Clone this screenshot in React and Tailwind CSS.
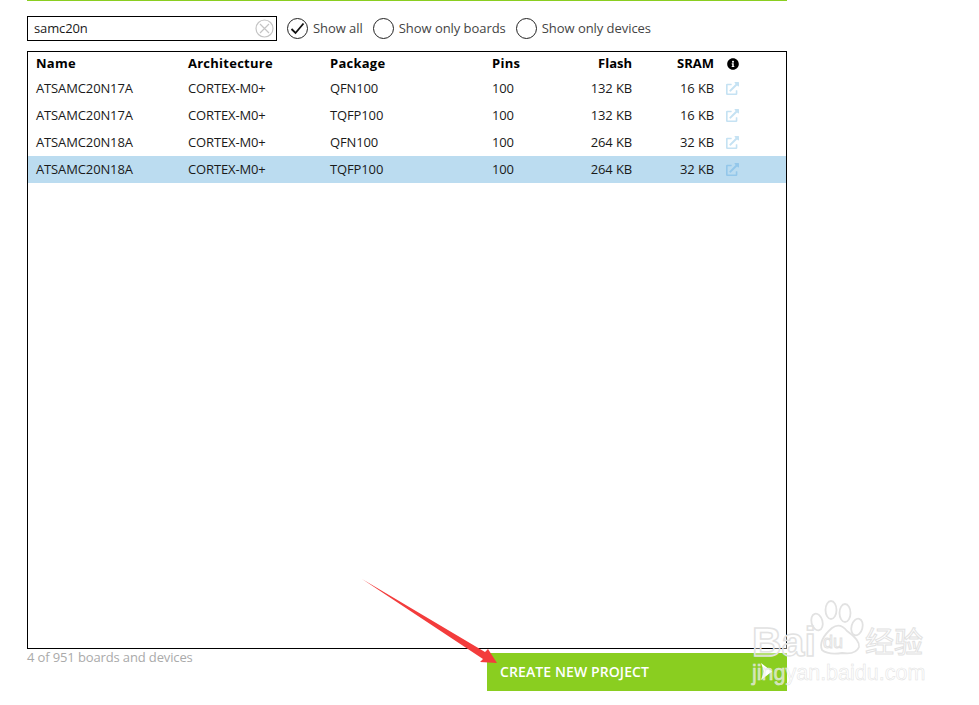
import React from 'react'
import { FaInfoCircle, FaExternalLinkAlt } from 'react-icons/fa'

const rows = [
  ['ATSAMC20N17A', 'CORTEX-M0+', 'QFN100', '100', '132 KB', '16 KB'],
  ['ATSAMC20N17A', 'CORTEX-M0+', 'TQFP100', '100', '132 KB', '16 KB'],
  ['ATSAMC20N18A', 'CORTEX-M0+', 'QFN100', '100', '264 KB', '32 KB'],
  ['ATSAMC20N18A', 'CORTEX-M0+', 'TQFP100', '100', '264 KB', '32 KB'],
]

const gridCols = 'grid grid-cols-[152px_142px_162px_60px_80px_82px_1fr] pl-2 items-center'

function Radio({ label, checked }) {
  return (
    <label className="flex items-center gap-[5px]">
      <span className="w-[21px] h-[21px] rounded-full border border-[#222] flex items-center justify-center">
        {checked && (
          <svg width="15" height="13" viewBox="0 0 15 13" fill="none">
            <path d="M1.5 7 L5.5 11 L13.5 1.5" stroke="#111" strokeWidth="1.8" />
          </svg>
        )}
      </span>
      <span className="text-[#444] tracking-[-0.05px]">{label}</span>
    </label>
  )
}

function Watermark() {
  return (
    <div className="absolute left-[750px] top-[598px] w-[180px] h-[90px] pointer-events-none">
      {/* paw */}
      <svg className="absolute left-0 top-0" width="130" height="70" viewBox="0 0 130 70" fill="none" stroke="#e2e2e2" strokeWidth="1.8">
        <ellipse cx="67" cy="24" rx="5.5" ry="8.5" transform="rotate(-15 67 24)" />
        <ellipse cx="81" cy="12" rx="5.5" ry="9" />
        <ellipse cx="95" cy="15" rx="5.5" ry="9" />
        <ellipse cx="107" cy="29" rx="5.5" ry="8.5" transform="rotate(15 107 29)" />
        <path d="M82 30 Q90 24 97 33 Q110 42 109 49 Q106 57 92 55 Q78 57 72 52 Q68 42 82 30 Z" />
      </svg>
      <span className="absolute left-[2px] top-[20px] text-[41px] leading-[48px] tracking-normal font-['Liberation_Sans',sans-serif] font-bold text-white/40 [-webkit-text-stroke:1.5px_#e2e2e2]">Bai</span>
      <span className="absolute left-[73px] top-[32px] text-[18px] leading-[24px] tracking-normal font-['Liberation_Sans',sans-serif] text-white/40 [-webkit-text-stroke:1px_#e2e2e2]">du</span>
      <span className="absolute left-[115px] top-[24px] text-[29px] leading-[36px] tracking-normal whitespace-nowrap font-['Noto_Sans_CJK_SC',sans-serif] text-white/40 [-webkit-text-stroke:1px_#e2e2e2]">经验</span>
      <span className="absolute left-[2px] top-[62px] text-[21.5px] leading-[26px] tracking-normal whitespace-nowrap font-['Liberation_Sans',sans-serif] text-white/60 [-webkit-text-stroke:0.5px_#e2e2e2]">jingyan.baidu.com</span>
    </div>
  )
}

export default function App() {
  return (
    <div className="relative w-[979px] h-[705px] overflow-hidden bg-white pl-[27px] text-[13px] tracking-[-0.13px] text-[#1a1a1a] font-['Open_Sans',sans-serif]">
      <div className="w-[760px] h-px bg-[#8ace20]" />

      <div className="flex items-center mt-[15px] h-[25px]">
        <div className="w-[250px] h-[25px] border border-black flex items-center justify-between pl-[6px] pr-[2px]">
          <span>samc20n</span>
          <svg width="19" height="19" viewBox="0 0 19 19" fill="none" stroke="#c4c4c4" strokeWidth="1.2">
            <circle cx="9.5" cy="9.5" r="8.5" />
            <path d="M5 5 L14 14 M14 5 L5 14" />
          </svg>
        </div>
        <div className="flex items-center gap-[10px] ml-[10px]">
          <Radio label="Show all" checked />
          <Radio label="Show only boards" />
          <Radio label="Show only devices" />
        </div>
      </div>

      <div className="w-[760px] h-[598px] mt-[10px] border border-black">
        <div className={`${gridCols} h-[23px] font-bold text-black tracking-[0.25px]`}>
          <span>Name</span>
          <span>Architecture</span>
          <span>Package</span>
          <span>Pins</span>
          <span className="text-right tracking-normal">Flash</span>
          <span className="text-right tracking-normal">SRAM</span>
          <span className="pl-3"><FaInfoCircle className="w-3 h-3 ml-px" /></span>
        </div>
        {rows.map((row, i) => (
          <div key={i} className={`${gridCols} h-[27px] ${i === 3 ? 'bg-[#bbdcf0]' : ''}`}>
            <span>{row[0]}</span>
            <span>{row[1]}</span>
            <span>{row[2]}</span>
            <span>{row[3]}</span>
            <span className="text-right pr-0">{row[4]}</span>
            <span className="text-right">{row[5]}</span>
            <span className="pl-3">
              <FaExternalLinkAlt className={`w-[13px] h-[13px] ${i === 3 ? 'text-[#93c7ea]' : 'text-[#c5e2f3]'}`} />
            </span>
          </div>
        ))}
      </div>

      <div className="w-[760px] flex items-start justify-between">
        <span className="leading-[16px] text-[#aaa]">4 of 951 boards and devices</span>
        <div className="w-[300px] h-[38px] mt-[4px] pb-px bg-[#8ace20] flex items-center justify-between pl-[13px] pr-[15px] text-white text-[14px] tracking-[0.1px] font-semibold">
          <span>CREATE NEW PROJECT</span>
          <svg width="11" height="17" viewBox="0 0 11 17"><path d="M0 0 L11 8.5 L0 17 L3 8.5 Z" fill="#fff" /></svg>
        </div>
      </div>

      <Watermark />

      {/* red annotation arrow */}
      <svg className="absolute left-0 top-0 pointer-events-none" width="979" height="705">
        <polygon points="362,579 485,652 488,649 497,663 480,662 483,659" fill="#f33c3c" />
      </svg>
    </div>
  )
}
